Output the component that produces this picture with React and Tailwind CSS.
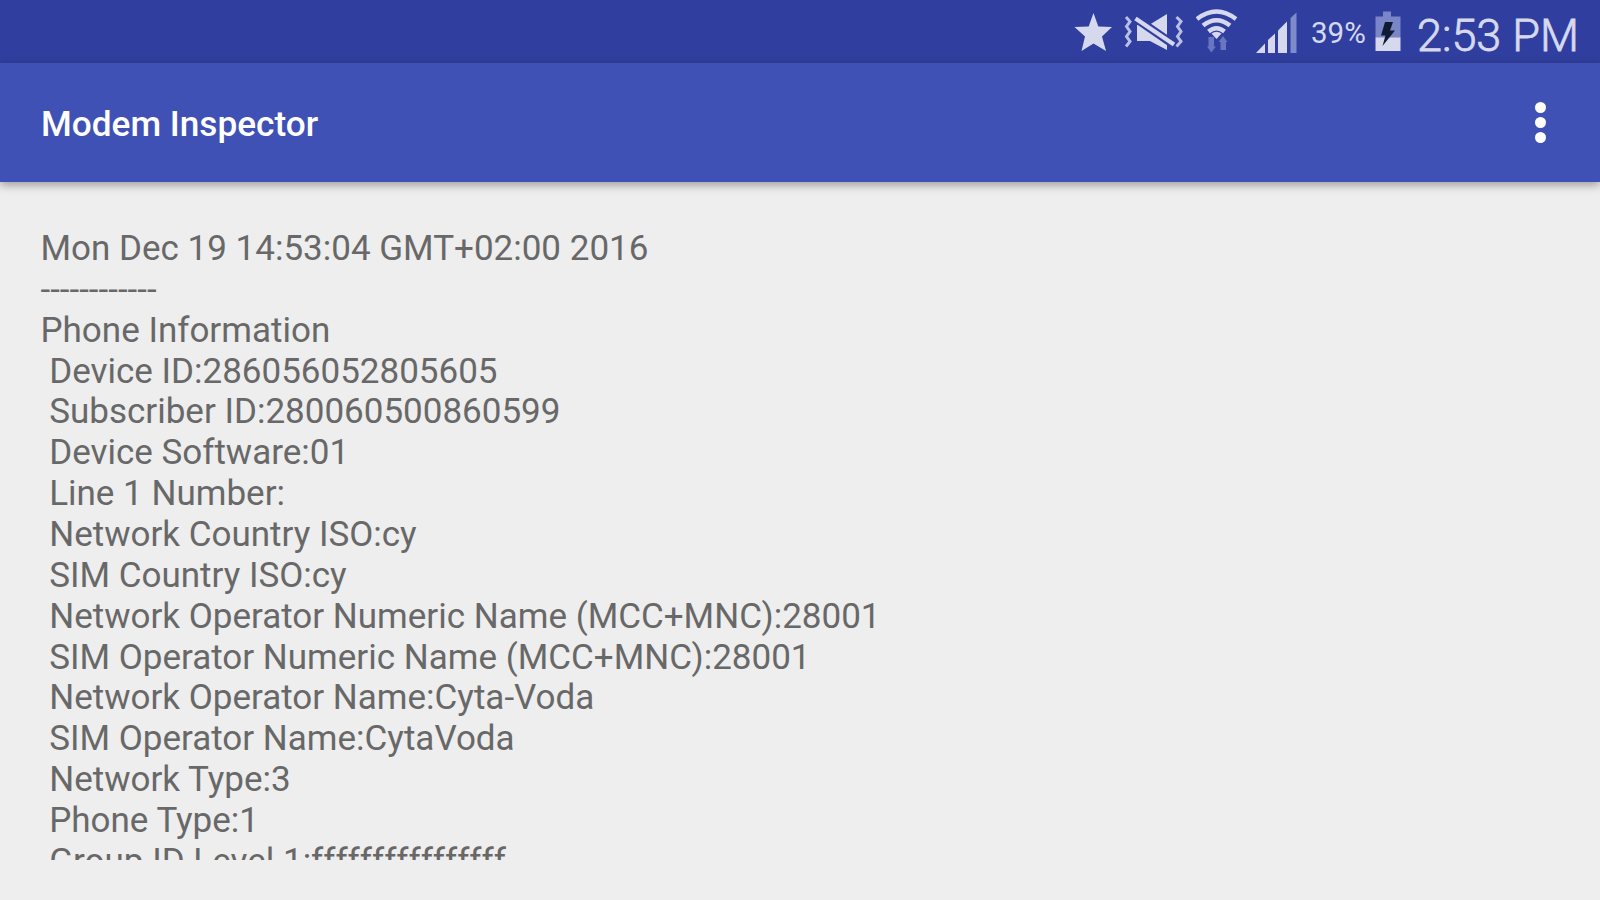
import React from 'react';

const lines = [
  'Mon Dec 19 14:53:04 GMT+02:00 2016',
  '------------',
  'Phone Information',
  ' Device ID:286056052805605',
  ' Subscriber ID:280060500860599',
  ' Device Software:01',
  ' Line 1 Number:',
  ' Network Country ISO:cy',
  ' SIM Country ISO:cy',
  ' Network Operator Numeric Name (MCC+MNC):28001',
  ' SIM Operator Numeric Name (MCC+MNC):28001',
  ' Network Operator Name:Cyta-Voda',
  ' SIM Operator Name:CytaVoda',
  ' Network Type:3',
  ' Phone Type:1',
  ' Group ID Level 1:ffffffffffffffff',
];

const StarIcon = () => (
  <svg className="w-[38px] h-[63px]" viewBox="0 0 38 63" fill="#d6d9ee">
    <path d="M19.5 13 L24.3 26.6 L38 27 L28 36.5 L32 51 L19.5 43.5 L7.5 51 L11 36.5 L0.5 27 L14.7 26.6 Z" />
  </svg>
);

const MuteIcon = () => (
  <svg className="ml-3 w-[60px] h-[63px]" viewBox="1125 0 60 63">
    <g fill="none" stroke="#b9bfe4" strokeWidth="3">
      <path d="M1127 17 L1131 21.5 L1127.5 26.5 L1131 31.5 L1127.5 36.5 L1131 41.5 L1127 46.5" />
      <path d="M1177.5 17 L1182 21.5 L1178.5 26.5 L1182 31.5 L1178.5 36.5 L1182 41.5 L1177.5 46.5" />
    </g>
    <path d="M1138 25 H1150 L1168 14 V50 L1151 41 H1138 Z" fill="#d6d9ee" />
    <path d="M1134 16.5 L1176 45.5" stroke="#303f9f" strokeWidth="8.5" />
    <path d="M1136.5 18.5 L1175 44.5" stroke="#d6d9ee" strokeWidth="4.2" />
  </svg>
);

const WifiIcon = () => (
  <svg className="ml-3 w-[42px] h-[63px]" viewBox="1197 0 42 63">
    <g fill="none" stroke="#d6d9ee" strokeWidth="4.4">
      <path d="M1198 19 Q1217.5 4 1237 19" />
      <path d="M1204 25.5 Q1217.5 15 1231 25.5" />
      <path d="M1209.5 31.5 Q1217.5 25 1225.5 31.5" />
    </g>
    <path d="M1212.5 33.5 Q1217.5 30 1222.5 33.5 L1217.5 39 Z" fill="#d6d9ee" />
    <g fill="#6875c0">
      <path d="M1209.5 37 H1215 V46.5 H1217 L1212.3 52.5 L1208 46.5 H1209.5 Z" />
      <path d="M1221.5 50 V42 H1219.5 L1224 36 L1228.5 42 H1227 V50 Z" />
    </g>
  </svg>
);

const SignalIcon = () => (
  <svg className="ml-[18px] w-[41px] h-[63px]" viewBox="1257 0 41 63" fill="#d6d9ee">
    <path d="M1257 53 L1266 43.5 V53 Z" />
    <path d="M1269 53 V40 L1276 33.5 V53 Z" />
    <path d="M1279 53 V30.5 L1288 21.5 V53 Z" />
    <path d="M1291.5 53 V18 L1297.5 12.5 V53 Z" fill="#7f8aca" />
  </svg>
);

const BatteryIcon = () => (
  <svg className="ml-[9px] w-[26px] h-[63px]" viewBox="1375 0 26 63">
    <path d="M1383 11.5 H1391 V16.5 H1400.5 V38 H1375.5 V16.5 H1383 Z" fill="#7b86c8" />
    <path d="M1375.5 37.5 H1400.5 V51 H1375.5 Z" fill="#d6d9ee" />
    <path d="M1385 22 H1393 L1390 30.5 H1395 L1382.5 46 L1385.5 35.5 H1381 Z" fill="#111a33" />
  </svg>
);

const StatusBar = () => (
  <div className="flex h-[63px] shrink-0 items-center justify-end bg-[#303f9f] pr-[22px] text-[#d6d9ee]">
    <StarIcon />
    <MuteIcon />
    <WifiIcon />
    <SignalIcon />
    <span className="ml-[14px] w-[55px] pt-[5px] text-[29.5px] leading-none whitespace-nowrap">39%</span>
    <BatteryIcon />
    <span className="ml-4 w-[161px] pt-[7px] text-[45px] leading-none font-light whitespace-nowrap [-webkit-text-stroke:0.8px_#d6d9ee]">2:53 PM</span>
  </div>
);

const AppBar = () => (
  <div className="relative flex h-[119px] shrink-0 items-center justify-between bg-[#3f51b5] pr-[54px] pl-[41px] shadow-[0_3px_9px_rgba(0,0,0,0.35)]">
    <h1 className="pt-1 text-[35.2px] leading-none font-medium text-white">Modem Inspector</h1>
    <button className="flex flex-col gap-1">
      <span className="size-[11px] rounded-full bg-white" />
      <span className="size-[11px] rounded-full bg-white" />
      <span className="size-[11px] rounded-full bg-white" />
    </button>
  </div>
);

const App = () => {
  return (
    <div className="flex h-screen flex-col overflow-hidden bg-[#eeeeee] font-[Roboto,sans-serif]">
      <StatusBar />
      <AppBar />
      <main className="mt-[47px] mb-10 flex-1 overflow-hidden pl-[40.5px] text-[35px] leading-[40.86px] text-[#686868]">
        {lines.map((line) => (
          <p key={line} className="whitespace-pre">{line}</p>
        ))}
      </main>
    </div>
  );
};

export default App;
